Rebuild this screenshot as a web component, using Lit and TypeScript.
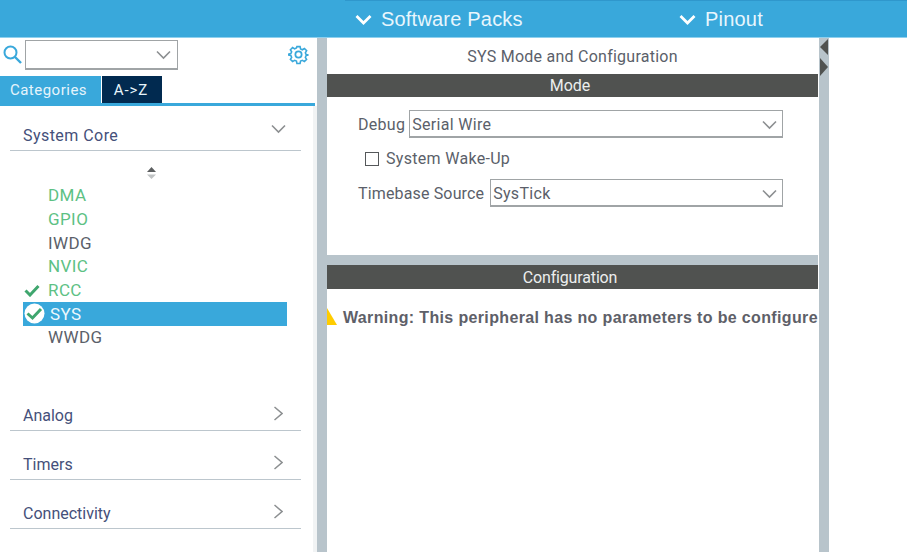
import { LitElement, html, css, svg } from 'lit';
import { customElement } from 'lit/decorators.js';

const chevDown = svg`<path d="M1 1.5 L7.5 8 L14 1.5" fill="none" stroke="#8c8f91" stroke-width="1.6"/>`;
const chevRight = svg`<path d="M1.5 1 L9 7.5 L1.5 14" fill="none" stroke="#8c8f91" stroke-width="1.5"/>`;
const headChev = svg`<path d="M1.5 2 L8.5 9 L15.5 2" fill="none" stroke="#fff" stroke-width="2.8"/>`;

@customElement('app-root')
export class AppRoot extends LitElement {
  static styles = css`
    :host {
      display: block;
      width: 907px;
      height: 552px;
      overflow: hidden;
      background: #fff;
      font-family: Roboto, "Liberation Sans", sans-serif;
      color: #5b5f6a;
    }
    .top {
      height: 37px;
      background: #39a8db;
      border-bottom: 1px solid #8fd0ee;
      display: flex;
      color: #e8f6fd;
      font-size: 20px;
      font-family: "Liberation Sans", sans-serif;
      letter-spacing: 0.2px;
      position: relative;
    }
    .top::before {
      content: "";
      position: absolute;
      left: 345px;
      right: 0;
      top: 0;
      height: 1px;
      background: #2f97cc;
    }
    .top-item {
      display: flex;
      align-items: center;
      gap: 9px;
      height: 37px;
      padding-top: 1px;
      box-sizing: border-box;
    }
    .top-item svg { width: 17px; height: 11px; }
    .packs { margin-left: 355px; width: 324px; }
    .main { display: flex; height: 514px; }

    .left {
      width: 317px;
      flex: none;
      display: flex;
      flex-direction: column;
    }
    .search {
      height: 38px;
      padding: 2px 8px 0 3px;
      display: flex;
      align-items: flex-start;
      box-sizing: border-box;
    }
    .search .glass { width: 19px; height: 19px; margin: 5px 3px 0 0; flex: none; }
    .combo {
      width: 153px;
      height: 30px;
      box-sizing: border-box;
      border: 1px solid #a0a4a6;
      border-bottom-width: 2px;
      display: flex;
      align-items: center;
      justify-content: flex-end;
      padding-right: 6px;
    }
    .combo svg { width: 15px; height: 10px; }
    .search .gear { width: 21px; height: 21px; margin: 4px 0 0 auto; }
    .tabs {
      display: flex;
      gap: 1px;
      height: 27px;
      font-size: 15px;
      letter-spacing: 0.5px;
      color: #e6f4fb;
    }
    .tab { display: flex; align-items: center; justify-content: center; }
    .tab.cat { width: 101px; background: #39a8db; padding-right: 4px; box-sizing: border-box; }
    .tab.az { width: 60px; background: #012a50; padding-right: 2px; box-sizing: border-box; letter-spacing: 0.9px; }
    .tabline { height: 3px; width: 315px; background: #39a8db; flex: none; }
    .tree {
      flex: 1;
      border-right: 4px solid #f1f3f4;
      padding: 0 12px 0 10px;
    }
    .group {
      height: 45px;
      box-sizing: border-box;
      padding-bottom: 5px;
      border-bottom: 1px solid #bcc6cd;
      display: flex;
      align-items: flex-end;
      justify-content: space-between;
      font-size: 16px;
      padding-left: 13px;
      padding-right: 15px;
      color: #45507a;
    }
    .group svg { width: 10px; height: 15px; margin-bottom: 4px; margin-right: 3px; }
    .group.open span { letter-spacing: 0.45px; }
    .group.open svg { width: 15px; height: 10px; margin: 0 0 11px; }
    .group.far { height: 49px; }
    .sort { display: flex; justify-content: center; padding: 16px 0 0; height: 17px; margin-right: 9px; }
    .sort svg { width: 11px; height: 13px; }
    .items { padding-left: 13px; height: 202px; width: 264px; }
    .item {
      height: 23.7px;
      display: flex;
      align-items: center;
      font-size: 17px;
      letter-spacing: 0.4px;
      padding-left: 25px;
      padding-bottom: 1px;
      position: relative;
      box-sizing: border-box;
    }
    .item.ok { color: #5dc184; }
    .item.sel { background: #39a8db; color: #eef8fd; padding-left: 27px; }
    .item svg { position: absolute; }
    .tick { width: 16px; height: 13px; left: 1px; top: 5px; }
    .badge { width: 21px; height: 21px; left: 1px; top: 1px; }

    .gutter { width: 10px; flex: none; background: #b8c4cb; }

    .center {
      width: 491px;
      flex: none;
      display: flex;
      flex-direction: column;
    }
    .title {
      height: 36px;
      display: flex;
      align-items: center;
      justify-content: center;
      font-size: 16px;
      letter-spacing: 0.25px;
      box-sizing: border-box;
    }
    .bar {
      height: 23px;
      background: #505250;
      color: #eceeee;
      font-size: 16px;
      display: flex;
      align-items: center;
      justify-content: center;
      flex: none;
      padding-right: 5px;
      box-sizing: border-box;
    }
    .bar.cfg { height: 24px; letter-spacing: -0.15px; padding-top: 1px; }
    .mode { height: 158px; box-sizing: border-box; padding: 13px 35px 0 31px; font-size: 16px; }
    .row { display: flex; align-items: center; gap: 4px; height: 28px; }
    .select {
      flex: 1;
      height: 28px;
      box-sizing: border-box;
      border: 1px solid #a0a4a6;
      border-bottom-width: 2px;
      display: flex;
      align-items: center;
      justify-content: space-between;
      padding: 2px 5px 0 2px;
      letter-spacing: 0.3px;
    }
    .select svg { width: 15px; height: 10px; }
    .check { display: flex; align-items: center; gap: 7px; height: 41px; padding-left: 7px; letter-spacing: 0.3px; }
    .box { width: 14px; height: 14px; box-sizing: border-box; border: 1px solid #55585a; }
    .label { letter-spacing: 0.3px; }
    .label.tb { letter-spacing: 0.15px; margin-right: 2px; }
    .band { height: 10px; background: #b8c4cb; flex: none; }
    .config { flex: 1; }
    .warn {
      display: flex;
      align-items: center;
      height: 27px;
      margin-top: 15px;
      font-family: "Liberation Sans", sans-serif;
      font-weight: 700;
      font-size: 16px;
      white-space: nowrap;
      gap: 6px;
      letter-spacing: 0.35px;
      color: #5e6068;
    }
    .warn svg { width: 10px; height: 17px; flex: none; margin-top: -3px; }

    .split { width: 10px; margin-left: 1px; flex: none; background: #b8c4cb; display: flex; flex-direction: column; align-items: center; }
    .split svg { width: 8px; flex: none; }
    .split .l { height: 16px; margin-top: 1px; }
    .split .r { height: 18px; margin-top: 3px; }
  `;

  render() {
    return html`
      <div class="top">
        <div class="top-item packs"><svg viewBox="0 0 17 11">${headChev}</svg>Software Packs</div>
        <div class="top-item"><svg viewBox="0 0 17 11">${headChev}</svg>Pinout</div>
      </div>
      <div class="main">
        <div class="left">
          <div class="search">
            <svg class="glass" viewBox="0 0 19 19"><circle cx="7.5" cy="7.5" r="6" fill="none" stroke="#39a8db" stroke-width="2"/><path d="M12 12 L18 18" stroke="#39a8db" stroke-width="2.4"/></svg>
            <div class="combo"><svg viewBox="0 0 15 10">${chevDown}</svg></div>
            <svg class="gear" viewBox="0 0 24 24" fill="none" stroke="#39a8db" stroke-width="2"><circle cx="12" cy="12" r="3.6"/><path d="M10 2h4l.6 3 2.3 1 2.6-1.6 2.8 2.8-1.6 2.6 1 2.3 3 .6v0l-3 .6-1 2.3 1.6 2.6-2.8 2.8-2.6-1.6-2.3 1-.6 3h-4l-.6-3-2.3-1-2.6 1.6-2.8-2.8 1.6-2.6-1-2.3-3-.6v-1.2l3-.6 1-2.3-1.6-2.6 2.8-2.8 2.6 1.6 2.3-1z" transform="translate(12 12) scale(.9) translate(-12 -12)"/></svg>
          </div>
          <div class="tabs">
            <div class="tab cat">Categories</div>
            <div class="tab az">A->Z</div>
          </div>
          <div class="tabline"></div>
          <div class="tree">
            <div class="group open"><span>System Core</span><svg viewBox="0 0 15 10">${chevDown}</svg></div>
            <div class="sort"><svg viewBox="0 0 11 13"><path d="M5.5 0 L10 5 H1 Z" fill="#5c5f60"/><path d="M5.5 12 L10 7.5 H1 Z" fill="#c0c3c4"/></svg></div>
            <div class="items">
              <div class="item ok">DMA</div>
              <div class="item ok">GPIO</div>
              <div class="item">IWDG</div>
              <div class="item ok">NVIC</div>
              <div class="item ok"><svg class="tick" viewBox="0 0 16 13"><path d="M1.5 6.5 L6 11 L14.5 2" fill="none" stroke="#3fa66e" stroke-width="3"/></svg>RCC</div>
              <div class="item sel"><svg class="badge" viewBox="0 0 21 21"><circle cx="10.5" cy="10.5" r="10" fill="#fff"/><path d="M3.5 10.5 L8.5 15 L17 6" fill="none" stroke="#3fa66e" stroke-width="3"/></svg>SYS</div>
              <div class="item">WWDG</div>
            </div>
            <div class="group"><span>Analog</span><svg viewBox="0 0 10 15">${chevRight}</svg></div>
            <div class="group far"><span>Timers</span><svg viewBox="0 0 10 15">${chevRight}</svg></div>
            <div class="group far"><span>Connectivity</span><svg viewBox="0 0 10 15">${chevRight}</svg></div>
          </div>
        </div>
        <div class="gutter"></div>
        <div class="center">
          <div class="title">SYS Mode and Configuration</div>
          <div class="bar">Mode</div>
          <div class="mode">
            <div class="row"><span class="label">Debug</span><div class="select">Serial Wire<svg viewBox="0 0 15 10">${chevDown}</svg></div></div>
            <div class="check"><div class="box"></div>System Wake-Up</div>
            <div class="row"><span class="label tb">Timebase Source</span><div class="select">SysTick<svg viewBox="0 0 15 10">${chevDown}</svg></div></div>
          </div>
          <div class="band"></div>
          <div class="bar cfg">Configuration</div>
          <div class="config">
            <div class="warn"><svg viewBox="0 0 10 17"><path d="M0 0 L10 17 H0 Z" fill="#ffcc00"/></svg>Warning: This peripheral has no parameters to be configure</div>
          </div>
        </div>
        <div class="split">
          <svg class="l" viewBox="0 0 8 16"><path d="M8 0 V16 L0 8 Z" fill="#505250"/></svg>
          <svg class="r" viewBox="0 0 8 18"><path d="M0 0 V18 L8 9 Z" fill="#505250"/></svg>
        </div>
      </div>
    `;
  }
}
